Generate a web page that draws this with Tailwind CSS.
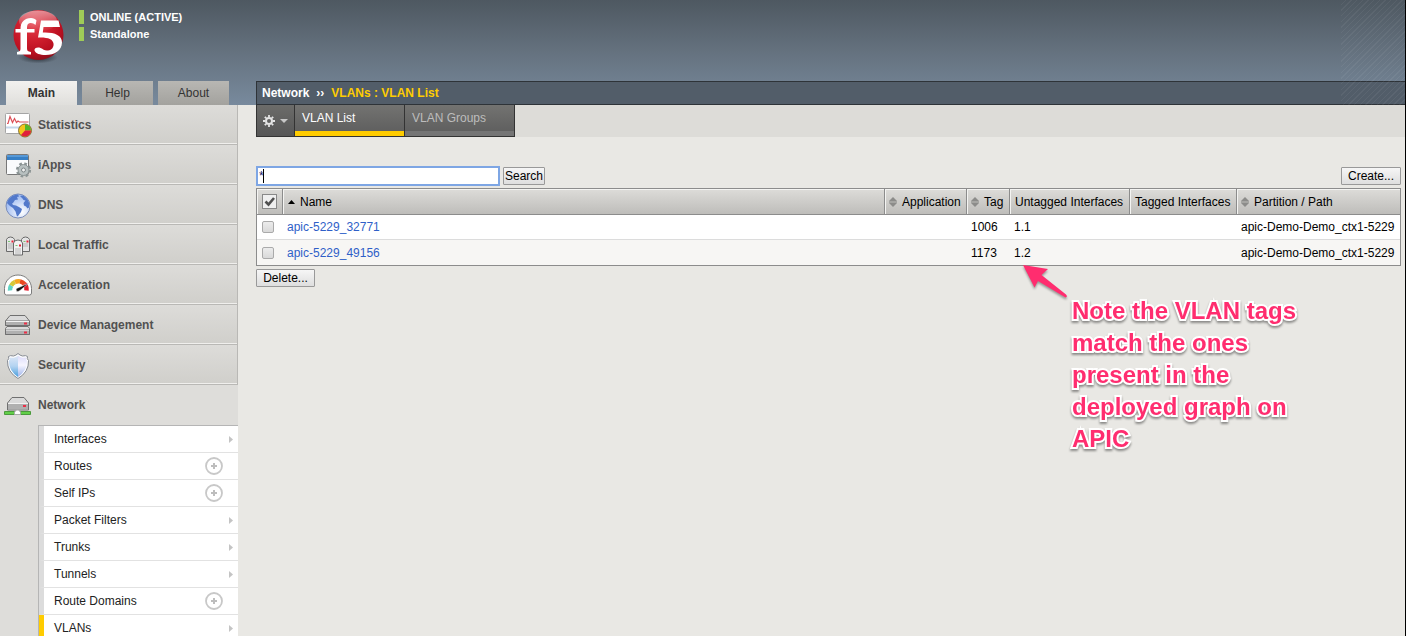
<!DOCTYPE html>
<html lang="en">
<head>
<meta charset="utf-8">
<title>VLAN List</title>
<script src="https://cdn.jsdelivr.net/npm/@tailwindcss/browser@4"></script>
</head>
<body class="relative h-screen overflow-hidden flex flex-col border-r border-black bg-[#e9e8e4] font-['Liberation_Sans',Arial,sans-serif] text-xs text-black">
<svg class="hidden" aria-hidden="true">
  <defs>
    <symbol id="sort" viewBox="0 0 8 10"><path d="M4 0 8 4H0zM4 10 8 6H0z" fill="#8c8c8a"/><path d="M0 4h8v2H0z" fill="#a5a5a2"/></symbol>
    <symbol id="arrow" viewBox="0 0 4 7"><path d="M0 0 4 3.5 0 7z" fill="#c4c4c4"/></symbol>
    <symbol id="plus" viewBox="0 0 18 18"><circle cx="9" cy="9" r="8" fill="#fff" stroke="#c8c8c8" stroke-width="1.8"/><path d="M9 6v6M6 9h6" stroke="#bdbdbd" stroke-width="2"/></symbol>
  </defs>
</svg>

<header class="relative shrink-0 bg-linear-to-b from-[#4e5861] via-[#65727f] to-[#788a9d]">
  <div class="absolute inset-y-0 right-0 w-16 bg-[repeating-linear-gradient(135deg,transparent_0px,transparent_3px,rgba(255,255,255,0.05)_3px,rgba(255,255,255,0.05)_4px)]"></div>
  <div class="flex h-[81px] pl-[10px] pt-2">
    <svg class="w-14 h-14" viewBox="0 0 56 56" role="img" aria-label="f5">
      <defs>
        <radialGradient id="ball" cx=".4" cy=".3" r=".75"><stop offset="0" stop-color="#e2404c"/><stop offset=".4" stop-color="#d01f2e"/><stop offset=".75" stop-color="#b90f20"/><stop offset="1" stop-color="#86101b"/></radialGradient>
        <linearGradient id="gloss" x1="0" y1="0" x2="0" y2="1"><stop offset="0" stop-color="#fff" stop-opacity=".5"/><stop offset="1" stop-color="#fff" stop-opacity="0"/></linearGradient>
        <radialGradient id="shade"><stop offset="0" stop-color="#1d2329" stop-opacity=".9"/><stop offset="1" stop-color="#1d2329" stop-opacity="0"/></radialGradient>
      </defs>
      <ellipse cx="28" cy="49.500" rx="20" ry="6" fill="url(#shade)"/>
      <circle cx="28.500" cy="27" r="25" fill="url(#ball)"/>
      <ellipse cx="28" cy="13" rx="19" ry="10.500" fill="url(#gloss)"/>
      <path d="M26.500 12.500 25.500 17c-2-2-5.500-3-7.500-1-1 1.200-1 3-1 5h7.500v3.500H17V40c0 3 1 3.500 4 4v2.500H7V44c3-.5 3.500-1 3.500-4V24.500H5.500V21h5c0-7 4-11 10.500-11 2.500 0 4.500 1 5.500 2.500z" fill="#fff"/>
      <path d="M31 12.500h17.500L50 19H33.500l-.7 5.500C44 24 52 27 52 34.500c0 8-7.500 12.500-16.500 12.500-5.500 0-10-1.500-11-4.500-.5-2.500 3-3.500 6-2.500 3 1.200 4 3 7.500 2.500 4-.5 6-3.500 5.500-7-.6-4.500-6-6.500-15.500-6z" fill="#fff"/>
    </svg>
    <div class="ml-[13px] mt-[2px] flex flex-col gap-[3px] text-[11px] leading-[14px] font-bold text-white">
      <p class="border-l-5 border-[#9fcb58] pl-[6px]">ONLINE (ACTIVE)</p>
      <p class="border-l-5 border-[#9fcb58] pl-[6px]">Standalone</p>
    </div>
  </div>
  <div class="flex h-6">
    <nav class="w-64 shrink-0 flex gap-[5px] pl-[6px] leading-6 text-center text-[#333]">
      <a href="#" class="w-[71px] bg-linear-to-b from-[#f2f1ef] to-[#e0dfdc] font-bold text-[#333]">Main</a>
      <a href="#" class="w-[71px] bg-linear-to-b from-[#b8b7b3] to-[#a3a29e]">Help</a>
      <a href="#" class="w-[71px] bg-linear-to-b from-[#b8b7b3] to-[#a3a29e]">About</a>
    </nav>
    <h1 class="grow flex gap-[7px] border border-r-0 border-[#2e3338] bg-[#525d69] pl-[5px] leading-[22px] font-bold text-white"><span>Network</span><span>››</span><span class="text-[#fc0]">VLANs : VLAN List</span></h1>
  </div>
</header>

<div class="grow flex min-h-0">
  <aside class="w-[238px] shrink-0 bg-[#dedddA]">
    <nav class="font-bold text-[#515151]">
      <a href="#" class="flex items-center h-10 pl-1 gap-[6px] border-r border-b border-[#b9b8b5] bg-linear-to-b from-[#dddcd9] to-[#d0cfcb] shadow-[inset_0_-1px_#f0efed]">
        <svg class="w-7 h-7" viewBox="0 0 28 28"><rect x="1.500" y="2.500" width="24" height="20" rx="1" fill="#fff" stroke="#a5a5a5"/><path d="M2 16.500h23" stroke="#c4d7ea" stroke-width="2"/><path d="M3 12.500h1l2-7 2.500 6 2-4 2 4 1.500-1.500 1.500 1h9" fill="none" stroke="#dc5058" stroke-width="1.200"/><circle cx="21" cy="19.500" r="6.500" fill="#f3c51e" stroke="#6b5b25" stroke-width=".8"/><path d="M21 19.500v-6a6 6 0 0 1 6 6z" fill="#52b72c"/><path d="M21 19.500h6a6 6 0 0 1-10 4.500z" fill="#e0203c"/></svg>Statistics</a>
      <a href="#" class="flex items-center h-10 pl-1 gap-[6px] border-r border-b border-[#b9b8b5] bg-linear-to-b from-[#dddcd9] to-[#d0cfcb] shadow-[inset_0_-1px_#f0efed]">
        <svg class="w-7 h-7" viewBox="0 0 28 28"><rect x="2.500" y="3.500" width="22" height="20" rx="1" fill="#fafbfc" stroke="#777"/><path d="M3 4h21v5H3z" fill="#367fc6"/><path d="M3 5h21" stroke="#79b3e6"/><circle cx="19.500" cy="19" r="6.300" fill="none" stroke="#8b9494" stroke-width="2.600" stroke-dasharray="2.600 2.350"/><circle cx="19.500" cy="19" r="5.500" fill="#b8c0c0" stroke="#8b9494"/><circle cx="19.500" cy="19" r="2" fill="#eee" stroke="#7e8788"/></svg>iApps</a>
      <a href="#" class="flex items-center h-10 pl-1 gap-[6px] border-r border-b border-[#b9b8b5] bg-linear-to-b from-[#dddcd9] to-[#d0cfcb] shadow-[inset_0_-1px_#f0efed]">
        <svg class="w-7 h-7" viewBox="0 0 28 28"><defs><radialGradient id="sea" cx=".65" cy=".75" r=".8"><stop offset="0" stop-color="#fff"/><stop offset="1" stop-color="#91b1ef"/></radialGradient></defs><circle cx="14" cy="15" r="12" fill="url(#sea)" stroke="#7b8db8"/><path d="M3 12C4.500 7 9 3.500 14 3.500l1 2-2 .5 1 2.500-3 .5-2 3-1 .5 1 1.500 3 .5 3 1.500 3 2-1 3-3 4-1 .5-1.500-5-2.500-3.500-3-2zM16 5l3-.5c3 1.500 5.500 4.500 6.300 8l-.3 4-1.500 1-1.500-2-2-1-.5-2.500 2-2.500-2-.5-1-1.500z" fill="#5279cb"/></svg>DNS</a>
      <a href="#" class="flex items-center h-10 pl-1 gap-[6px] border-r border-b border-[#b9b8b5] bg-linear-to-b from-[#dddcd9] to-[#d0cfcb] shadow-[inset_0_-1px_#f0efed]">
        <svg class="w-7 h-7" viewBox="0 0 28 28"><g fill="#e4e4e4" stroke="#6a6a6a"><path d="M2.500 20.500v-12q1-2.500 4-2.500t4 2.500v12zM17.500 20.500v-12q1-2.500 4-2.500t4 2.500v12z"/><path d="M9.500 24V12q1-3 4.500-3t4.500 3v12z" fill="#f2f2f2"/></g><path d="M4 13h5M4 15h5M4 17h5M19 13h5M19 15h5M11 18h6M11 20h6M11 22h6" stroke="#b5b5b5"/><path d="M7.500 9.500h2v2h-2zM22.500 9.500h2v2h-2zM15 13.500h2v2h-2z" fill="#ea2038"/><path d="M4 10.500h2M11.500 14.500h2M19.500 10.500h2" stroke="#7cc776"/></svg>Local Traffic</a>
      <a href="#" class="flex items-center h-10 pl-1 gap-[6px] border-r border-b border-[#b9b8b5] bg-linear-to-b from-[#dddcd9] to-[#d0cfcb] shadow-[inset_0_-1px_#f0efed]">
        <svg class="w-7 h-7" viewBox="0 0 28 28"><path d="M.5 22v-4.500C.5 10 6.500 4 14 4s13.500 6 13.500 13.500V22q0 2-2 2h-23q-2 0-2-2z" fill="#fff" stroke="#7c7c7c"/><g fill="none" stroke-width="4.500"><path d="M6 19.500a8.500 8.500 0 0 1 1.200-5" stroke="#62d3c6"/><path d="M7.200 14.500A8.500 8.500 0 0 1 11 11" stroke="#d5c93a"/><path d="M11 11a8.500 8.500 0 0 1 5-.6" stroke="#f6a61e"/><path d="M16 10.400a8.500 8.500 0 0 1 4.500 2.600" stroke="#e9481f"/><path d="M20.500 13A8.500 8.500 0 0 1 22.500 19.500" stroke="#e31d2c"/></g><path d="M12.500 17.500 25 12 16 19.500q-2 1.500-3.500.7-.8-1.500 0-2.700z" fill="#111" stroke="#fff" stroke-width=".5"/></svg>Acceleration</a>
      <a href="#" class="flex items-center h-10 pl-1 gap-[6px] border-r border-b border-[#b9b8b5] bg-linear-to-b from-[#dddcd9] to-[#d0cfcb] shadow-[inset_0_-1px_#f0efed]">
        <svg class="w-7 h-7" viewBox="0 0 28 28"><g stroke="#707070"><path d="M1.500 10 6 4.500h15L25.500 10v4.500h-24zM3 15.500h21l1.500 2v6h-24v-6z" fill="#dadada"/><path d="M1.500 10h24v4.500h-24zM1.500 18.500h24v5h-24z" fill="#b0b0b0"/></g><path d="M2 10.500h23M2 19h23" stroke="#f2f2f2"/><path d="M20 11.500h3v2h-3zM20 20.500h3v2h-3z" fill="#ea3048"/></svg>Device Management</a>
      <a href="#" class="flex items-center h-10 pl-1 gap-[6px] border-r border-b border-[#b9b8b5] bg-linear-to-b from-[#dddcd9] to-[#d0cfcb] shadow-[inset_0_-1px_#f0efed]">
        <svg class="w-7 h-7" viewBox="0 0 28 28"><defs><linearGradient id="shieldL" x1="0" y1="0" x2="0" y2="1"><stop offset="0" stop-color="#dfe8f8"/><stop offset=".5" stop-color="#b3d3f1"/><stop offset="1" stop-color="#4b9fdc"/></linearGradient><linearGradient id="shieldR" x1="0" y1="0" x2="0" y2="1"><stop offset="0" stop-color="#dcdcfa"/><stop offset=".45" stop-color="#f6f5ff"/><stop offset="1" stop-color="#9db4ea"/></linearGradient></defs><path d="M14 2.500q-2 2-4.500 2.500Q6 4 4.500 5.500q1 2-1 4Q3 21 14 27.500 25 21 24.500 9.500q-2-2-1-4Q22 4 18.500 5 16 4.500 14 2.500z" fill="#fff" stroke="#858a92"/><path d="M14 4.500q-2 2-4.500 2.200L6 6.500q0 2-1.200 3.500Q5 20 14 26z" fill="url(#shieldL)"/><path d="M14 4.500q2 2 4.500 2.200l3.500-.2q0 2 1.200 3.500Q23 20 14 26z" fill="url(#shieldR)"/></svg>Security</a>
      <a href="#" class="flex items-center h-10 pl-1 gap-[6px]">
        <svg class="w-7 h-7" viewBox="0 0 28 28"><path d="M3.500 12 8 6.500h12l4.500 5.500v7h-21z" fill="#dadada" stroke="#707070"/><path d="M4 12.500h20V18H4z" fill="#b0b0b0"/><path d="M4 12.500h20" stroke="#f2f2f2"/><path d="M19 14h3v2h-3z" fill="#ea3048"/><path d="M.5 20.500h26v3H.5z" fill="#62cf48" stroke="#4a9a3c"/><path d="M10.500 23.500V21l2-2h2l2 2v2.500z" fill="#fff" stroke="#aaa"/></svg>Network</a>
    </nav>
    <ul class="ml-[38px] border-t border-l border-[#b5b5b5] text-[#222] leading-[26px]">
      <li class="border-l-5 border-l-[#dcdcdc] border-b border-b-[#e2e2e2] bg-white"><a href="#" class="flex items-center justify-between pl-[10px] pr-[5px]">Interfaces<svg class="w-1 h-[7px]"><use href="#arrow"/></svg></a></li>
      <li class="border-l-5 border-l-[#dcdcdc] border-b border-b-[#e2e2e2] bg-white"><a href="#" class="flex items-center justify-between pl-[10px] pr-[15px]">Routes<svg class="w-[18px] h-[18px]"><use href="#plus"/></svg></a></li>
      <li class="border-l-5 border-l-[#dcdcdc] border-b border-b-[#e2e2e2] bg-white"><a href="#" class="flex items-center justify-between pl-[10px] pr-[15px]">Self IPs<svg class="w-[18px] h-[18px]"><use href="#plus"/></svg></a></li>
      <li class="border-l-5 border-l-[#dcdcdc] border-b border-b-[#e2e2e2] bg-white"><a href="#" class="flex items-center justify-between pl-[10px] pr-[5px]">Packet Filters<svg class="w-1 h-[7px]"><use href="#arrow"/></svg></a></li>
      <li class="border-l-5 border-l-[#dcdcdc] border-b border-b-[#e2e2e2] bg-white"><a href="#" class="flex items-center justify-between pl-[10px] pr-[5px]">Trunks<svg class="w-1 h-[7px]"><use href="#arrow"/></svg></a></li>
      <li class="border-l-5 border-l-[#dcdcdc] border-b border-b-[#e2e2e2] bg-white"><a href="#" class="flex items-center justify-between pl-[10px] pr-[5px]">Tunnels<svg class="w-1 h-[7px]"><use href="#arrow"/></svg></a></li>
      <li class="border-l-5 border-l-[#dcdcdc] border-b border-b-[#e2e2e2] bg-white"><a href="#" class="flex items-center justify-between pl-[10px] pr-[15px]">Route Domains<svg class="w-[18px] h-[18px]"><use href="#plus"/></svg></a></li>
      <li class="border-l-5 border-l-[#fc0] border-b border-b-[#e2e2e2] bg-white"><a href="#" class="flex items-center justify-between pl-[10px] pr-[5px]">VLANs<svg class="w-1 h-[7px]"><use href="#arrow"/></svg></a></li>
    </ul>
  </aside>

  <main class="grow ml-[18px] min-w-0">
    <div class="h-8 flex bg-[#dddcd8]">
      <div class="flex border-x border-b border-[#333] text-white">
        <button aria-label="Options" class="w-[37px] flex items-center justify-center gap-[5px] bg-linear-to-b from-[#6c6c6a] to-[#565656]">
          <svg class="w-3 h-3" viewBox="0 0 12 12"><circle cx="6" cy="6" r="3" fill="none" stroke="#e4e4e4" stroke-width="2"/><path d="M6 0v2M6 10v2M0 6h2M10 6h2M1.800 1.800l1.400 1.400M8.800 8.800l1.400 1.400M1.800 10.200l1.400-1.400M8.800 3.200l1.400-1.400" stroke="#e4e4e4" stroke-width="1.800"/></svg>
          <svg class="w-2 h-1" viewBox="0 0 8 4"><path d="M0 0h8L4 4z" fill="#c8c8c8"/></svg>
        </button>
        <a href="#" class="w-[110px] border-l border-[#333] shadow-[inset_0_-5px_#fc0] bg-linear-to-b from-[#737371] to-[#5c5c5c] pl-[7px] leading-[26px]">VLAN List</a>
        <a href="#" class="w-[110px] border-l border-[#333] shadow-[inset_0_-5px_#757575] bg-linear-to-b from-[#737371] to-[#5c5c5c] pl-[7px] leading-[26px] text-[#bdbdbd]">VLAN Groups</a>
      </div>
    </div>
    <div class="pt-[29px] pr-1">
      <form class="flex items-center gap-[3px] pb-[2px]">
        <div class="relative"><input type="text" aria-label="Search VLANs" value="*" class="block w-[244px] h-5 border-2 border-[#7ea6e4] bg-white px-[1px] text-[#226] outline-none"><span class="absolute left-[7px] top-[3px] h-[14px] w-px bg-black"></span></div>
        <button type="button" class="h-[18px] w-[42px] rounded-[1px] border border-[#999] bg-linear-to-b from-[#f6f6f6] to-[#dedede] leading-4">Search</button>
        <button type="button" class="ml-auto h-[18px] w-[60px] rounded-[1px] border border-[#999] bg-linear-to-b from-[#f6f6f6] to-[#dedede] leading-4">Create...</button>
      </form>
      <div class="border border-[#8c8c8c]">
      <table class="w-full table-fixed border-separate border-spacing-0 text-left">
        <colgroup><col class="w-[26px]"><col><col class="w-[82px]"><col class="w-[43px]"><col class="w-[120px]"><col class="w-[107px]"><col class="w-[163px]"></colgroup>
        <thead class="[&_th]:h-[26px] [&_th]:border-b [&_th]:border-b-[#8c8c8c] [&_th]:p-0 [&_th]:font-normal [&_th]:whitespace-nowrap [&_th]:bg-linear-to-b [&_th]:from-[#dddcd9] [&_th]:to-[#bebdba] [&_th]:shadow-[inset_1px_1px_#f4f4f2]">
          <tr>
            <th class="border-r border-r-[#8c8c8c]"><span class="grid w-[15px] mx-auto"><input type="checkbox" checked aria-label="Select all" class="col-start-1 row-start-1 w-[15px] h-[15px] appearance-none border border-[#888] bg-[#efefef]"><svg class="col-start-1 row-start-1 w-[15px] h-[15px] pointer-events-none" viewBox="0 0 15 15"><path d="M3.500 7.500 6.500 10.500 12 4" fill="none" stroke="#505050" stroke-width="2.600"/></svg></span></th>
            <th class="border-r border-r-[#8c8c8c]"><span class="flex items-center gap-[5px] pl-[5px]"><svg class="w-[7px] h-1" viewBox="0 0 7 4"><path d="M3.500 0 7 4H0z"/></svg>Name</span></th>
            <th class="border-r border-r-[#8c8c8c]"><span class="flex items-center gap-[5px] pl-[4px]"><svg class="w-2 h-[10px]"><use href="#sort"/></svg>Application</span></th>
            <th class="border-r border-r-[#8c8c8c]"><span class="flex items-center gap-[5px] pl-[4px]"><svg class="w-2 h-[10px]"><use href="#sort"/></svg>Tag</span></th>
            <th class="border-r border-r-[#8c8c8c]"><span class="pl-[5px]">Untagged Interfaces</span></th>
            <th class="border-r border-r-[#8c8c8c]"><span class="pl-[5px]">Tagged Interfaces</span></th>
            <th><span class="flex items-center gap-[5px] pl-[4px]"><svg class="w-2 h-[10px]"><use href="#sort"/></svg>Partition / Path</span></th>
          </tr>
        </thead>
        <tbody class="[&_td]:h-[25px] [&_td]:p-0 [&_td]:pl-1 [&_td]:whitespace-nowrap">
          <tr class="bg-white [&_td]:border-b [&_td]:border-[#dcdcdc]">
            <td><input type="checkbox" aria-label="Select apic-5229_32771" class="block ml-px w-3 h-3 appearance-none rounded-xs border border-[#aaa] bg-linear-to-b from-[#ececec] to-[#d9d9d9]"></td>
            <td><a href="#" class="text-[#2f5fc8]">apic-5229_32771</a></td><td></td><td>1006</td><td>1.1</td><td></td><td>apic-Demo-Demo_ctx1-5229</td>
          </tr>
          <tr class="bg-[#f7f6f4]">
            <td><input type="checkbox" aria-label="Select apic-5229_49156" class="block ml-px w-3 h-3 appearance-none rounded-xs border border-[#aaa] bg-linear-to-b from-[#ececec] to-[#d9d9d9]"></td>
            <td><a href="#" class="text-[#2f5fc8]">apic-5229_49156</a></td><td></td><td>1173</td><td>1.2</td><td></td><td>apic-Demo-Demo_ctx1-5229</td>
          </tr>
        </tbody>
      </table>
      </div>
      <button type="button" class="mt-[3px] block h-[18px] w-[59px] rounded-[1px] border border-[#999] bg-linear-to-b from-[#f6f6f6] to-[#dedede] leading-4">Delete...</button>
    </div>
  </main>
</div>

<div class="absolute top-[264px] right-[100px] w-[290px]">
  <svg class="w-14 h-9 ml-[7px] overflow-visible drop-shadow-[0_2px_1px_rgba(0,0,0,0.35)]" viewBox="0 0 56 36"><path d="M1 1 26 5 19.500 11 44 30.500Q46 33 43.500 33.500L16 17 12.500 23.500z" fill="#ff2d6f"/></svg>
  <p class="-mt-[5px] pl-[57px] text-2xl leading-8 font-bold text-[#ff2d6f] [paint-order:stroke_fill] [-webkit-text-stroke:4px_white] drop-shadow-[0_2px_1px_rgba(0,0,0,0.4)]">Note the VLAN tags match the ones present in the deployed graph on APIC</p>
</div>
</body>
</html>
